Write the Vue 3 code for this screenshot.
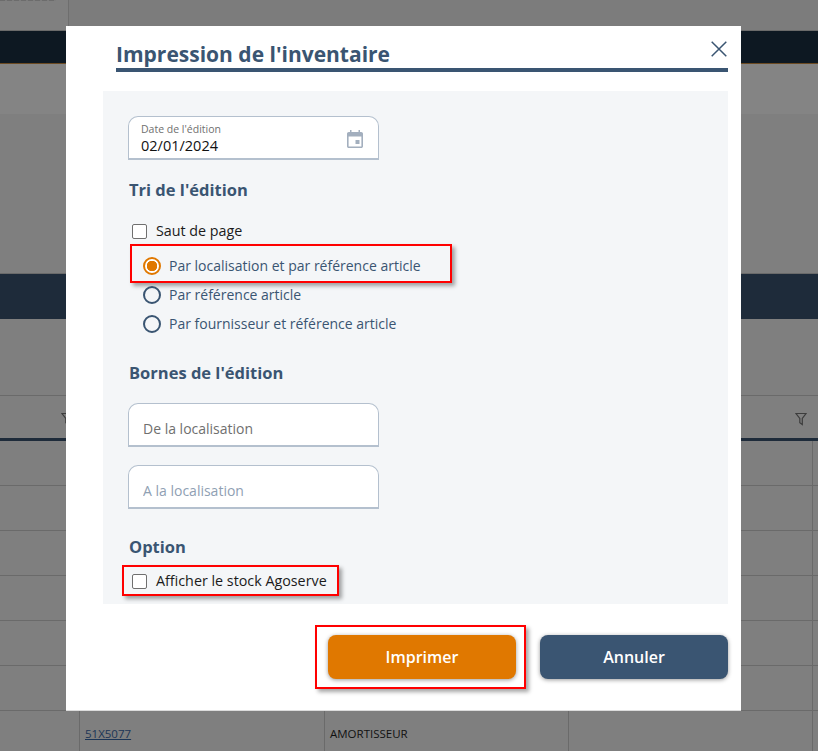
<script setup>
import { ref } from 'vue'

const tri = ref('loc')
const options = [
  { id: 'loc', label: 'Par localisation et par référence article' },
  { id: 'ref', label: 'Par référence article' },
  { id: 'four', label: 'Par fournisseur et référence article' }
]
const rows = [1, 2, 3, 4, 5, 6]
</script>

<template>
  <div class="page">
    <div class="top-row"><span class="top-cell"><span class="faint"></span></span></div>
    <div class="dark-bar"></div>
    <div class="light-band"></div>
    <div class="plain-band"></div>
    <div class="table-title"></div>
    <div class="filters"></div>
    <div class="table-head">
      <svg class="filter-icon left" viewBox="0 0 12 14" width="12" height="14">
        <path d="M1 1.500h10L7.300 6.500v6L4.800 10.800V6.500z" fill="none" stroke="#3d3d3d" stroke-width="1.200" />
      </svg>
      <svg class="filter-icon" viewBox="0 0 12 14" width="12" height="14">
        <path d="M1 1.500h10L7.300 6.500v6L4.800 10.800V6.500z" fill="none" stroke="#3d3d3d" stroke-width="1.200" />
      </svg>
    </div>
    <div v-for="r in rows" :key="r" class="table-row">
      <span class="cell"></span><span class="cell"></span><span class="cell"></span><span class="cell"></span><span></span>
    </div>
    <div class="table-row last">
      <span class="cell"></span>
      <span class="cell"><a class="link">51X5077</a></span>
      <span class="cell">AMORTISSEUR</span>
      <span class="cell"></span>
      <span></span>
    </div>

    <div class="modal">
      <header class="modal-head">
        <h1>Impression de l'inventaire</h1>
        <svg class="close" viewBox="0 0 16 16" width="16" height="16">
          <path d="M.7.7l14.600 14.600M15.300.7L.7 15.300" stroke="#3a5572" stroke-width="1.500" fill="none" />
        </svg>
      </header>

      <section class="panel">
        <div class="date-field">
          <div>
            <label>Date de l'édition</label>
            <div class="date-value">02/01/2024</div>
          </div>
          <svg class="calendar" viewBox="0 0 16 18" width="16" height="18">
            <path d="M3 0h1.500v2h7V0H13v2h1.200C15.200 2 16 2.800 16 3.800v12.400c0 1-.8 1.800-1.800 1.800H1.800C.8 18 0 17.200 0 16.200V3.800C0 2.800.8 2 1.800 2H3zM1.600 6.500v9.900h12.800V6.500zM8.500 10h4v4h-4z" fill="#a3afbe" fill-rule="evenodd" />
          </svg>
        </div>

        <h2 class="tri-title">Tri de l'édition</h2>
        <div class="check-row saut">
          <span class="box"></span>
          <span>Saut de page</span>
        </div>
        <div class="radios">
          <div
            v-for="o in options"
            :key="o.id"
            class="radio-row"
            @click="tri = o.id"
          >
            <span class="radio" :class="{ on: tri === o.id }"></span>
            <span>{{ o.label }}</span>
            <i v-if="o.id === 'loc'" class="red-box"></i>
          </div>
        </div>

        <h2 class="bornes-title">Bornes de l'édition</h2>
        <input class="field first" placeholder="De la localisation" />
        <input class="field second" placeholder="A la localisation" />

        <h2 class="option-title">Option</h2>
        <div class="check-row agoserve">
          <span class="box"></span>
          <span>Afficher le stock Agoserve</span>
          <i class="red-box"></i>
        </div>
      </section>

      <footer class="actions">
        <button class="btn print">Imprimer<i class="red-box"></i></button>
        <button class="btn cancel">Annuler</button>
      </footer>
    </div>
  </div>
</template>

<style>
html, body {
  margin: 0;
  overflow: hidden;
}
</style>

<style scoped>
.page {
  position: relative;
  width: 818px;
  height: 751px;
  overflow: hidden;
  background: #7f7f7f;
  font-family: "Open Sans", "Noto Sans", sans-serif;
}
.top-row {
  height: 30px;
  background: #7c7c7c;
  border-bottom: 1px solid #6a6a6a;
}
.top-cell {
  display: block;
  width: 68px;
  height: 30px;
  background: #808080;
  border-right: 1px solid #6e6e6e;
  overflow: hidden;
}
.faint {
  display: block;
  width: 56px;
  height: 1px;
  background: repeating-linear-gradient(90deg, #6c6c6c 0 5px, #7c7c7c 5px 7px);
}
.dark-bar {
  height: 32px;
  background: #0d1822;
  border-bottom: 1px solid #6b4a22;
}
.light-band {
  height: 50px;
  background: #848484;
}
.plain-band {
  height: 159px;
}
.table-title {
  height: 45px;
  background: #1e2b3a;
  border-top: 1px solid #6a6a6a;
}
.filters {
  height: 76px;
}
.table-head {
  position: relative;
  height: 42px;
  border-top: 1px solid #6a6a6a;
  border-bottom: 3px solid #1e2b3a;
  background: #7f7f7f;
}
.filter-icon {
  position: absolute;
  right: 11px;
  top: 16px;
}
.filter-icon.left {
  right: auto;
  left: 61px;
}
.table-row {
  display: grid;
  grid-template-columns: 80px 245px 244px 244px 1fr;
  height: 44px;
  border-bottom: 1px solid #6a6a6a;
  font-size: 11.500px;
  color: #111;
}
.table-row.last {
  border-bottom: 0;
}
.cell {
  border-right: 1px solid #6a6a6a;
  padding-left: 5px;
  line-height: 46px;
}
.link {
  color: #1c3556;
  text-decoration: underline;
}

.modal {
  position: absolute;
  left: 66px;
  top: 26px;
  width: 675px;
  height: 685px;
  background: #fff;
  box-sizing: border-box;
  padding: 15px 13px 0 37px;
  border-bottom: 1px solid #dcdcdc;
}
.modal-head {
  position: relative;
  margin-left: 13px;
  height: 27px;
  border-bottom: 4px solid #3a5572;
}
h1 {
  margin: 0;
  font-size: 21px;
  line-height: 27px;
  font-weight: 700;
  color: #3a5572;
}
.close {
  position: absolute;
  right: 1px;
  top: 0;
}
.panel {
  height: 513px;
  margin-top: 19px;
  box-sizing: border-box;
  padding: 25px 25px 0;
  background: #f4f6f8;
}
.date-field {
  display: flex;
  justify-content: space-between;
  align-items: center;
  width: 251px;
  height: 44px;
  box-sizing: border-box;
  padding: 1px 15px 0 12px;
  background: #fff;
  border: 1px solid #b4c0ce;
  border-bottom-width: 2px;
  border-radius: 10px 10px 0 0;
}
label {
  display: block;
  font-size: 10.500px;
  line-height: 14px;
  color: #6f6f6f;
}
.date-value {
  font-size: 14.500px;
  line-height: 19px;
  color: #111;
}
.calendar {
  margin-top: 1px;
}
h2 {
  margin: 0 0 0 1px;
  font-size: 16.500px;
  line-height: 24px;
  font-weight: 700;
  color: #3a5572;
}
.tri-title {
  margin-top: 18px;
}
.check-row {
  position: relative;
  display: flex;
  align-items: center;
  gap: 9px;
  margin-left: 4px;
  font-size: 14.300px;
  line-height: 20px;
  color: #1b1b1b;
}
.saut {
  margin-top: 19px;
}
.box {
  width: 13px;
  height: 13px;
  border: 1.500px solid #6f6f6f;
  border-radius: 2px;
  background: #fff;
}
.radios {
  margin-top: 10px;
}
.radio-row {
  position: relative;
  display: flex;
  align-items: center;
  gap: 8px;
  height: 29px;
  margin-left: 15px;
  font-size: 14px;
  color: #3a5572;
}
.radio {
  width: 14px;
  height: 14px;
  border: 2px solid #3a5572;
  border-radius: 50%;
}
.radio.on {
  border-color: #e07800;
  background: radial-gradient(circle, #e07800 0 5px, #fff 5.500px);
}
.bornes-title {
  margin-top: 23px;
}
.field {
  display: block;
  width: 251px;
  height: 44px;
  box-sizing: border-box;
  padding: 7px 13px 0 14px;
  background: #fff;
  border: 1px solid #b4c0ce;
  border-bottom-width: 2px;
  border-radius: 10px 10px 0 0;
  outline: none;
  font: 14px "Open Sans", "Noto Sans", sans-serif;
}
.first {
  margin-top: 18px;
}
.first::placeholder {
  color: #6f6f6f;
  opacity: 1;
}
.second {
  margin-top: 18px;
}
.second::placeholder {
  color: #8fa0b3;
  opacity: 1;
}
.option-title {
  margin-top: 26px;
}
.agoserve {
  margin-top: 12px;
}
.red-box {
  position: absolute;
  border: 2px solid #f00;
  box-shadow: 3px 3px 4px rgba(0, 0, 0, 0.35);
  pointer-events: none;
}
.radio-row .red-box {
  left: -13px;
  top: -7px;
  width: 318px;
  height: 35px;
}
.agoserve .red-box {
  left: -10px;
  top: -6px;
  width: 213px;
  height: 27px;
}
.print .red-box {
  left: -13px;
  top: -10px;
  width: 207px;
  height: 60px;
}
.actions {
  display: flex;
  justify-content: flex-end;
  gap: 24px;
  margin-top: 31px;
}
.btn {
  position: relative;
  width: 188px;
  height: 44px;
  border: 0;
  border-radius: 8px;
  font: 600 16px "Open Sans", "Noto Sans", sans-serif;
  color: #fff;
  box-shadow: 0 1px 4px rgba(0, 0, 0, 0.4);
}
.print {
  background: #e07800;
}
.cancel {
  background: #3a5572;
}
</style>
